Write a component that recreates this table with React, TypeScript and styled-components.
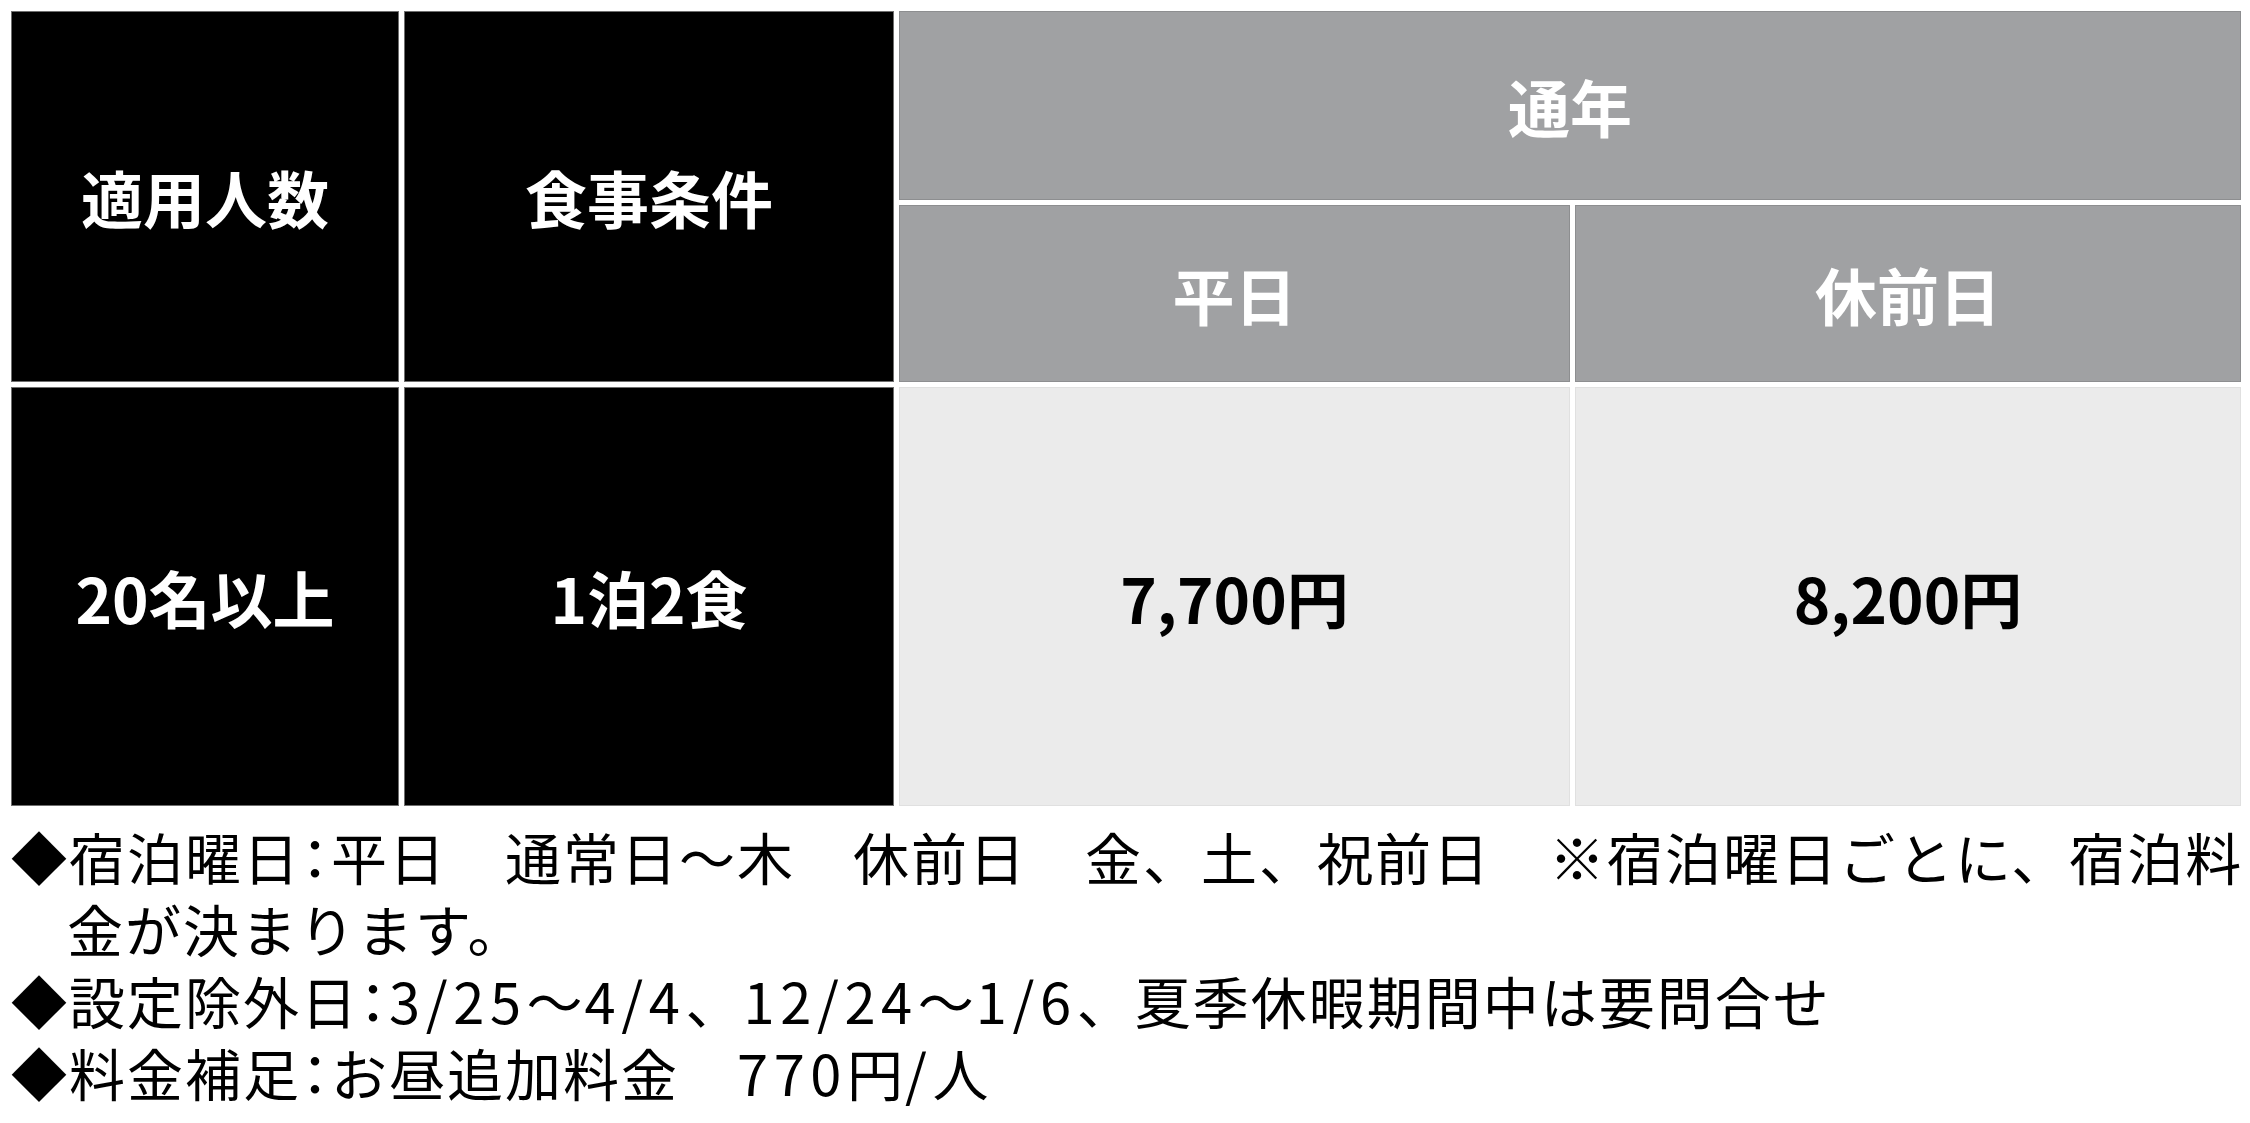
import React from 'react';
import styled, { createGlobalStyle } from 'styled-components';

const GlobalStyle = createGlobalStyle`
  html, body {
    margin: 0;
    padding: 0;
    background: #ffffff;
  }
  body {
    font-family: "Noto Sans CJK JP", "Noto Sans", sans-serif;
    color: #000000;
  }
`;

const Page = styled.div`
  padding: 11px 0 0 11px;
`;

const RateTable = styled.div`
  display: grid;
  grid-template-columns: 388px 490px 671px 666px;
  grid-template-rows: 189px 177px 419px;
  gap: 5px;
`;

type Tone = 'dark' | 'mid' | 'light';

const toneStyles: Record<Tone, { bg: string; fg: string; edge: string }> = {
  dark: { bg: '#000000', fg: '#ffffff', edge: '#6e6e6e' },
  mid: { bg: '#a0a1a3', fg: '#ffffff', edge: '#8d8e90' },
  light: { bg: '#ebebeb', fg: '#000000', edge: '#e0e0e0' },
};

const Cell = styled.div<{ $tone: Tone; $row: string; $col: string }>`
  grid-row: ${(p) => p.$row};
  grid-column: ${(p) => p.$col};
  display: flex;
  align-items: center;
  justify-content: center;
  background: ${(p) => toneStyles[p.$tone].bg};
  color: ${(p) => toneStyles[p.$tone].fg};
  border: 1px solid ${(p) => toneStyles[p.$tone].edge};
  font-size: 62px;
  font-weight: 700;
  line-height: 1;
  white-space: nowrap;
`;

const Notes = styled.ul`
  list-style: none;
  margin: 14px 0 0 0;
  padding: 0;
  font-size: 56px;
  font-weight: 400;
  line-height: 72px;
  letter-spacing: 2px;
`;

const Note = styled.li`
  padding-left: 1em;
  text-indent: -1em;
  white-space: nowrap;
`;

// half-width colon, as in the printed notes
const Colon = styled.span`
  font-feature-settings: "halt";
`;

const Num = styled.span`
  letter-spacing: 0.1em;
`;

const App: React.FC = () => {
  return (
    <Page>
      <GlobalStyle />
      <RateTable>
        <Cell $tone="dark" $row="1 / 3" $col="1">適用人数</Cell>
        <Cell $tone="dark" $row="1 / 3" $col="2">食事条件</Cell>
        <Cell $tone="mid" $row="1" $col="3 / 5">通年</Cell>
        <Cell $tone="mid" $row="2" $col="3">平日</Cell>
        <Cell $tone="mid" $row="2" $col="4">休前日</Cell>
        <Cell $tone="dark" $row="3" $col="1">20名以上</Cell>
        <Cell $tone="dark" $row="3" $col="2">1泊2食</Cell>
        <Cell $tone="light" $row="3" $col="3">7,700円</Cell>
        <Cell $tone="light" $row="3" $col="4">8,200円</Cell>
      </RateTable>

      <Notes>
        <Note>
          ◆宿泊曜日<Colon>：</Colon>平日　通常日～木　休前日　金、土、祝前日　※宿泊曜日ごとに、宿泊料
          <br />
          金が決まります。
        </Note>
        <Note>
          ◆設定除外日<Colon>：</Colon><Num>3/25</Num>～<Num>4/4</Num>、<Num>12/24</Num>～<Num>1/6</Num>、夏季休暇期間中は要問合せ
        </Note>
        <Note>
          ◆料金補足<Colon>：</Colon>お昼追加料金　<Num>770</Num>円<Num>/</Num>人
        </Note>
      </Notes>
    </Page>
  );
};

export default App;
